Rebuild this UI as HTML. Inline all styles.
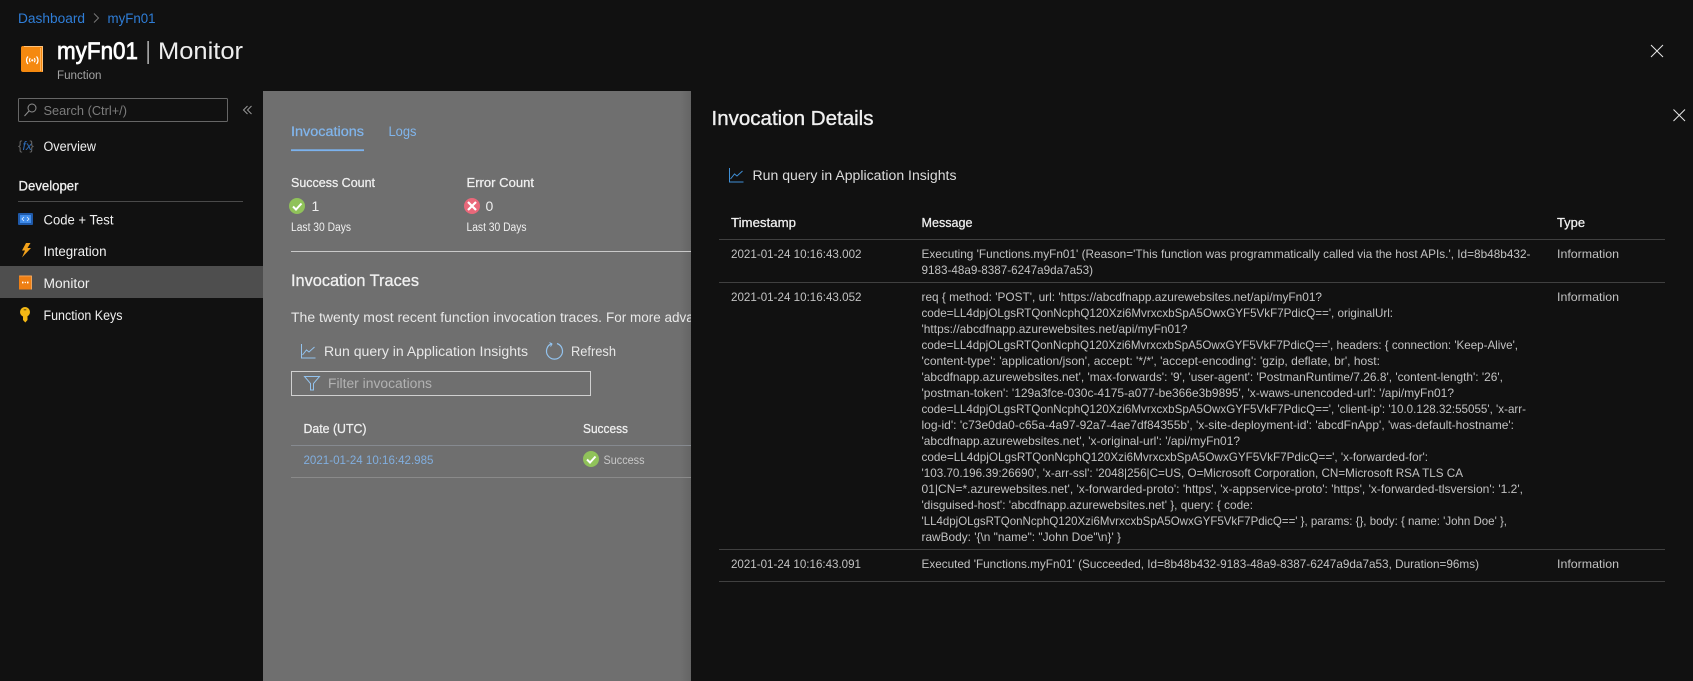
<!DOCTYPE html>
<html lang="en">
<head>
<meta charset="utf-8">
<title>myFn01 | Monitor</title>
<style>
html,body{margin:0;padding:0;background:#111;width:1693px;height:681px;overflow:hidden}
svg{display:block}
text{font-family:"Liberation Sans",sans-serif;font-size:12.5px;white-space:pre}
.r{font-size:12px;fill:#c2c2c2}
.h{font-size:13px;fill:#f0f0f0;stroke:#f0f0f0;stroke-width:.25px}
.g{font-size:13.5px;fill:#f0f0f0}
.s{stroke-width:.3px}
</style>
</head>
<body>
<svg width="1693" height="681" viewBox="0 0 1693 681" xmlns="http://www.w3.org/2000/svg">
<defs>
<linearGradient id="sh" x1="0" x2="1" y1="0" y2="0"><stop offset="0" stop-color="#6f6f6f"/><stop offset="1" stop-color="#646464"/></linearGradient>
<clipPath id="cp"><rect x="263" y="91" width="428" height="590"/></clipPath>
</defs>
<rect width="1693" height="681" fill="#111"/>

<!-- breadcrumb -->
<text x="18" y="23" textLength="67" lengthAdjust="spacingAndGlyphs" style="font-size:13.5px" fill="#2f7ed8">Dashboard</text>
<path d="M94 13.5l4.500 4.500-4.500 4.500" fill="none" stroke="#777" stroke-width="1"/>
<text x="107.500" y="23" textLength="48" lengthAdjust="spacingAndGlyphs" style="font-size:13.5px" fill="#2f7ed8">myFn01</text>

<!-- title -->
<path d="M23 46h20v26H23a2 2 0 0 1-2-2V48a2 2 0 0 1 2-2z" fill="#f5890f"/>
<path d="M24 46.500h18.500v25" fill="none" stroke="#ffc27a" stroke-width="1"/>
<path d="M40.500 48v23" stroke="#ffb45e" stroke-width="1" fill="none"/>
<g fill="none" stroke="#fff" stroke-width="1.200">
<path d="M28 56.500a5.500 5.500 0 0 0 0 7.500M36.500 56.500a5.500 5.500 0 0 1 0 7.500M30.300 58.200a3 3 0 0 0 0 4M34.200 58.200a3 3 0 0 1 0 4"/>
</g>
<circle cx="32.300" cy="60.300" r="1.100" fill="#fff"/>
<text x="57" y="59" textLength="81" lengthAdjust="spacingAndGlyphs" style="font-size:24px;stroke:#fff;stroke-width:.7px" fill="#fff">myFn01</text>
<rect x="147.500" y="41" width="1.200" height="23" fill="#ddd"/>
<text x="158" y="59" textLength="85" lengthAdjust="spacingAndGlyphs" style="font-size:24px" fill="#eee">Monitor</text>
<text x="57" y="79" textLength="44.500" lengthAdjust="spacingAndGlyphs" style="font-size:11.500px" fill="#a3a3a3">Function</text>

<!-- search -->
<rect x="18.500" y="98.500" width="209" height="23" rx="1" fill="none" stroke="#666"/>
<circle cx="32" cy="108" r="4" fill="none" stroke="#8f8f8f"/>
<path d="M29 111L24.500 116" stroke="#8f8f8f" fill="none"/>
<text x="43.500" y="115" textLength="83.500" lengthAdjust="spacingAndGlyphs" style="font-size:13px" fill="#7c7c7c">Search (Ctrl+/)</text>
<path d="M247.500 106l-4 4 4 4M251.500 106l-4 4 4 4" fill="none" stroke="#999"/>

<!-- nav -->
<text x="18" y="150" style="font-size:13px" fill="#666">{</text>
<text x="22.500" y="150" style="font-size:12px;font-style:italic" fill="#2f6db8">fx</text>
<text x="29.500" y="150" style="font-size:13px" fill="#666">}</text>
<text x="43.500" y="151" textLength="52.500" lengthAdjust="spacingAndGlyphs" class="g">Overview</text>
<text x="18.500" y="190.500" textLength="60" lengthAdjust="spacingAndGlyphs" class="h s" style="font-size:13.5px">Developer</text>
<rect x="18" y="201" width="225" height="1" fill="#4a4a4a"/>

<rect x="18" y="213" width="15" height="12" rx="1" fill="#1f59a8"/>
<rect x="20" y="215" width="11" height="8" fill="#3f8ceb"/>
<path d="M24 217l-2 2 2 2M27 217l2 2-2 2" fill="none" stroke="#e6f1ff" stroke-width=".8"/>
<text x="43.500" y="224.500" textLength="70" lengthAdjust="spacingAndGlyphs" class="g">Code + Test</text>

<path d="M26 243h4.500l-3 5h3.500l-9 9.500 3-7h-3z" fill="#f3a21b"/>
<text x="43.500" y="256" textLength="63" lengthAdjust="spacingAndGlyphs" class="g">Integration</text>

<rect x="0" y="266" width="263" height="32" fill="#4e4e4e"/>
<rect x="19" y="275.500" width="12.500" height="14" fill="#ee7f14"/>
<path d="M19.500 276h12v13.500" fill="none" stroke="#ffb469" stroke-width=".8"/>
<path d="M22 282.500h1.500M27 282.500h1.500" stroke="#fff" stroke-width="1.800"/>
<circle cx="25.300" cy="282.500" r=".7" fill="#fff"/>
<text x="43.500" y="288" textLength="46" lengthAdjust="spacingAndGlyphs" class="g">Monitor</text>

<circle cx="25" cy="312" r="5" fill="#f5b914"/>
<path d="M23 315h4.500v5l-2.200 2.500-2.300-2.500z" fill="#f5b914"/>
<rect x="23.700" y="309" width="2.600" height="1.400" fill="#8a6a10"/>
<text x="43.500" y="320" textLength="79" lengthAdjust="spacingAndGlyphs" class="g">Function Keys</text>

<!-- grey panel -->
<rect x="263" y="91" width="428" height="590" fill="#6f6f6f"/>
<rect x="681" y="91" width="10" height="590" fill="url(#sh)"/>
<g clip-path="url(#cp)">
<text x="291" y="136" textLength="73" lengthAdjust="spacingAndGlyphs" style="font-size:13.5px;stroke:#80b5ec;stroke-width:.25px" fill="#80b5ec">Invocations</text>
<text x="388.500" y="136" textLength="28" lengthAdjust="spacingAndGlyphs" style="font-size:13.5px" fill="#80b5ec">Logs</text>
<rect x="291" y="149.300" width="73" height="1.800" fill="#7bb2ee"/>

<text x="291" y="187" textLength="84" lengthAdjust="spacingAndGlyphs" class="h">Success Count</text>
<text x="466.500" y="187" textLength="67.500" lengthAdjust="spacingAndGlyphs" class="h">Error Count</text>

<circle cx="297" cy="206" r="8" fill="#90c25a"/>
<path d="M293 206.500l3 3 5.500-6" fill="none" stroke="#fff" stroke-width="2"/>
<text x="311.500" y="211" style="font-size:14px" fill="#eee">1</text>
<circle cx="472" cy="206" r="8" fill="#e9687a"/>
<path d="M468 202l8 8M476 202l-8 8" fill="none" stroke="#fff" stroke-width="2.200"/>
<text x="485.500" y="211" style="font-size:14px" fill="#eee">0</text>

<text x="291" y="231" textLength="60" lengthAdjust="spacingAndGlyphs" style="font-size:11.500px" fill="#f0f0f0">Last 30 Days</text>
<text x="466.500" y="231" textLength="60" lengthAdjust="spacingAndGlyphs" style="font-size:11.500px" fill="#f0f0f0">Last 30 Days</text>

<rect x="291" y="251" width="400" height="1" fill="#c9c9c9"/>

<text x="291" y="286" textLength="128" lengthAdjust="spacingAndGlyphs" style="font-size:17px;stroke:#f0f0f0;stroke-width:.3px" fill="#f0f0f0">Invocation Traces</text>
<text x="291" y="322" textLength="311" lengthAdjust="spacingAndGlyphs" style="font-size:13.5px" fill="#e8e8e8">The twenty most recent function invocation traces.</text>
<text x="606" y="322" style="font-size:13.5px" fill="#e8e8e8">For more advanced</text>

<path d="M301.500 344v14h14M302.500 355l4-5 2.500 2 5.500-5" fill="none" stroke="#93c3ee" stroke-width="1"/>
<text x="324" y="356" textLength="204" lengthAdjust="spacingAndGlyphs" style="font-size:13.5px" fill="#e8e8e8">Run query in Application Insights</text>
<path d="M552 343.500a8 8 0 1 0 5 0" fill="none" stroke="#93c3ee" stroke-width="1.200"/>
<path d="M549.500 342.500l2.500 1.500-1.500 2.500" fill="none" stroke="#93c3ee" stroke-width="1"/>
<text x="571" y="356" textLength="45" lengthAdjust="spacingAndGlyphs" style="font-size:13.5px" fill="#e8e8e8">Refresh</text>

<rect x="291.500" y="371.500" width="299" height="24" fill="none" stroke="#d0d0d0"/>
<path d="M304.500 376.500h15l-6 7v6.500h-3v-6.500z" fill="none" stroke="#93c3ee" stroke-width="1"/>
<text x="328" y="388" textLength="104" lengthAdjust="spacingAndGlyphs" style="font-size:13.5px" fill="#b2b2b2">Filter invocations</text>

<text x="303.500" y="433" textLength="63" lengthAdjust="spacingAndGlyphs" class="h">Date (UTC)</text>
<text x="583" y="433" textLength="45" lengthAdjust="spacingAndGlyphs" class="h">Success</text>
<rect x="291" y="445" width="400" height="1" fill="#868a90"/>
<text x="303.500" y="464" textLength="130" lengthAdjust="spacingAndGlyphs" style="font-size:12px" fill="#81aede">2021-01-24 10:16:42.985</text>
<circle cx="591" cy="459" r="8" fill="#90c25a"/>
<path d="M587 459.500l3 3 5.500-6" fill="none" stroke="#fff" stroke-width="2"/>
<text x="603.500" y="464" textLength="41" lengthAdjust="spacingAndGlyphs" style="font-size:12px" fill="#c8c8c8">Success</text>
<rect x="291" y="477" width="400" height="1" fill="#8a8a8a"/>
</g>

<!-- right panel -->
<rect x="691" y="91" width="1002" height="590" fill="#111"/>
<path d="M1651 45l12 12M1663 45l-12 12" stroke="#e6e6e6" stroke-width="1" fill="none"/>
<path d="M1673.500 109.500l11.500 11.500M1685 109.500l-11.500 11.500" stroke="#e6e6e6" stroke-width="1" fill="none"/>
<text x="711.500" y="125" textLength="162" lengthAdjust="spacingAndGlyphs" style="font-size:20px;stroke:#f0f0f0;stroke-width:.35px" fill="#f0f0f0">Invocation Details</text>

<path d="M729.500 168v14h14M730.500 179l4-5 2.500 2 5.500-5" fill="none" stroke="#3f8fd6" stroke-width="1"/>
<text x="752.500" y="180" textLength="204" lengthAdjust="spacingAndGlyphs" style="font-size:13.5px" fill="#dcdcdc">Run query in Application Insights</text>

<text x="731" y="227" textLength="65" lengthAdjust="spacingAndGlyphs" class="h">Timestamp</text>
<text x="921.500" y="227" textLength="51" lengthAdjust="spacingAndGlyphs" class="h">Message</text>
<text x="1557" y="227" textLength="28" lengthAdjust="spacingAndGlyphs" class="h">Type</text>
<rect x="719" y="239" width="946" height="1" fill="#404040"/>

<text class="r" x="731" y="258" textLength="130.500" lengthAdjust="spacingAndGlyphs">2021-01-24 10:16:43.002</text>
<text class="r" x="921.500" y="258" textLength="609" lengthAdjust="spacingAndGlyphs">Executing 'Functions.myFn01' (Reason='This function was programmatically called via the host APIs.', Id=8b48b432-</text>
<text class="r" x="921.500" y="274" textLength="171.500" lengthAdjust="spacingAndGlyphs">9183-48a9-8387-6247a9da7a53)</text>
<text class="r" x="1557" y="258" textLength="62" lengthAdjust="spacingAndGlyphs">Information</text>
<rect x="719" y="282" width="946" height="1" fill="#404040"/>

<text class="r" x="731" y="301" textLength="130.500" lengthAdjust="spacingAndGlyphs">2021-01-24 10:16:43.052</text>
<text class="r" x="1557" y="301" textLength="62" lengthAdjust="spacingAndGlyphs">Information</text>
<text class="r" x="921.500" y="301" textLength="400.500" lengthAdjust="spacingAndGlyphs">req { method: 'POST', url: 'https://abcdfnapp.azurewebsites.net/api/myFn01?</text>
<text class="r" x="921.500" y="317" textLength="471.500" lengthAdjust="spacingAndGlyphs">code=LL4dpjOLgsRTQonNcphQ120Xzi6MvrxcxbSpA5OwxGYF5VkF7PdicQ==', originalUrl:</text>
<text class="r" x="921.500" y="333" textLength="266" lengthAdjust="spacingAndGlyphs">'https://abcdfnapp.azurewebsites.net/api/myFn01?</text>
<text class="r" x="921.500" y="349" textLength="596.500" lengthAdjust="spacingAndGlyphs">code=LL4dpjOLgsRTQonNcphQ120Xzi6MvrxcxbSpA5OwxGYF5VkF7PdicQ==', headers: { connection: 'Keep-Alive',</text>
<text class="r" x="921.500" y="365" textLength="458.500" lengthAdjust="spacingAndGlyphs">'content-type': 'application/json', accept: '*/*', 'accept-encoding': 'gzip, deflate, br', host:</text>
<text class="r" x="921.500" y="381" textLength="581.500" lengthAdjust="spacingAndGlyphs">'abcdfnapp.azurewebsites.net', 'max-forwards': '9', 'user-agent': 'PostmanRuntime/7.26.8', 'content-length': '26',</text>
<text class="r" x="921.500" y="397" textLength="532.500" lengthAdjust="spacingAndGlyphs">'postman-token': '129a3fce-030c-4175-a077-be366e3b9895', 'x-waws-unencoded-url': '/api/myFn01?</text>
<text class="r" x="921.500" y="413" textLength="604.500" lengthAdjust="spacingAndGlyphs">code=LL4dpjOLgsRTQonNcphQ120Xzi6MvrxcxbSpA5OwxGYF5VkF7PdicQ==', 'client-ip': '10.0.128.32:55055', 'x-arr-</text>
<text class="r" x="921.500" y="429" textLength="592.500" lengthAdjust="spacingAndGlyphs">log-id': 'c73e0da0-c65a-4a97-92a7-4ae7df84355b', 'x-site-deployment-id': 'abcdFnApp', 'was-default-hostname':</text>
<text class="r" x="921.500" y="445" textLength="318.500" lengthAdjust="spacingAndGlyphs">'abcdfnapp.azurewebsites.net', 'x-original-url': '/api/myFn01?</text>
<text class="r" x="921.500" y="461" textLength="506.500" lengthAdjust="spacingAndGlyphs">code=LL4dpjOLgsRTQonNcphQ120Xzi6MvrxcxbSpA5OwxGYF5VkF7PdicQ==', 'x-forwarded-for':</text>
<text class="r" x="921.500" y="477" textLength="541.500" lengthAdjust="spacingAndGlyphs">'103.70.196.39:26690', 'x-arr-ssl': '2048|256|C=US, O=Microsoft Corporation, CN=Microsoft RSA TLS CA</text>
<text class="r" x="921.500" y="493" textLength="601.500" lengthAdjust="spacingAndGlyphs">01|CN=*.azurewebsites.net', 'x-forwarded-proto': 'https', 'x-appservice-proto': 'https', 'x-forwarded-tlsversion': '1.2',</text>
<text class="r" x="921.500" y="509" textLength="331.500" lengthAdjust="spacingAndGlyphs">'disguised-host': 'abcdfnapp.azurewebsites.net' }, query: { code:</text>
<text class="r" x="921.500" y="525" textLength="585.500" lengthAdjust="spacingAndGlyphs">'LL4dpjOLgsRTQonNcphQ120Xzi6MvrxcxbSpA5OwxGYF5VkF7PdicQ==' }, params: {}, body: { name: 'John Doe' },</text>
<text class="r" x="921.500" y="541" textLength="199.500" lengthAdjust="spacingAndGlyphs">rawBody: '{\n "name": "John Doe"\n}' }</text>
<rect x="719" y="549" width="946" height="1" fill="#404040"/>

<text class="r" x="731" y="568" textLength="130" lengthAdjust="spacingAndGlyphs">2021-01-24 10:16:43.091</text>
<text class="r" x="921.500" y="568" textLength="557.500" lengthAdjust="spacingAndGlyphs">Executed 'Functions.myFn01' (Succeeded, Id=8b48b432-9183-48a9-8387-6247a9da7a53, Duration=96ms)</text>
<text class="r" x="1557" y="568" textLength="62" lengthAdjust="spacingAndGlyphs">Information</text>
<rect x="719" y="581" width="946" height="1" fill="#404040"/>
</svg>
</body>
</html>
